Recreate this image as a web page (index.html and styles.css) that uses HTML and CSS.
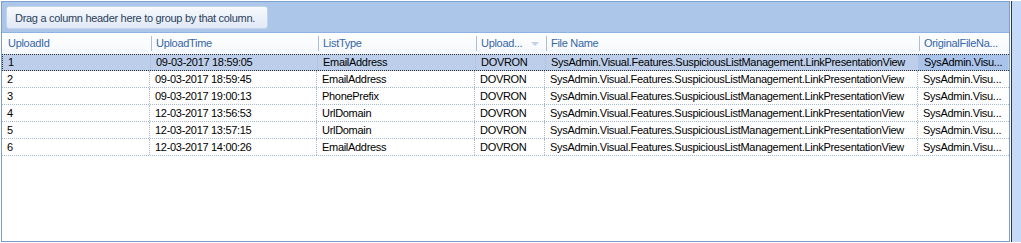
FILE: index.html
```html
<!DOCTYPE html>
<html lang="en">

<head>
  <meta charset="UTF-8">
  <title>Uploads</title>
  <link rel="stylesheet" href="styles.css">
</head>

<body>
  <div class="frame">
    <div class="grid">
      <!-- Group panel -->
      <div class="group-panel">
        <div class="group-hint">Drag a column header here to group by that column.</div>
      </div>

      <div class="row header">
        <div class="cell c1">UploadId</div>
        <div class="cell c2">UploadTime</div>
        <div class="cell c3">ListType</div>
        <div class="cell c4">Upload...<span class="sort"></span></div>
        <div class="cell c5">File Name</div>
        <div class="cell c6">OriginalFileNa...</div>
      </div>

      <div class="row data selected">
        <div class="cell c1">1</div>
        <div class="cell c2">09-03-2017 18:59:05</div>
        <div class="cell c3">EmailAddress</div>
        <div class="cell c4">DOVRON</div>
        <div class="cell c5">SysAdmin.Visual.Features.SuspiciousListManagement.LinkPresentationView</div>
        <div class="cell c6 focused">SysAdmin.Visu...</div>
      </div>
      <div class="row data">
        <div class="cell c1">2</div>
        <div class="cell c2">09-03-2017 18:59:45</div>
        <div class="cell c3">EmailAddress</div>
        <div class="cell c4">DOVRON</div>
        <div class="cell c5">SysAdmin.Visual.Features.SuspiciousListManagement.LinkPresentationView</div>
        <div class="cell c6">SysAdmin.Visu...</div>
      </div>
      <div class="row data">
        <div class="cell c1">3</div>
        <div class="cell c2">09-03-2017 19:00:13</div>
        <div class="cell c3">PhonePrefix</div>
        <div class="cell c4">DOVRON</div>
        <div class="cell c5">SysAdmin.Visual.Features.SuspiciousListManagement.LinkPresentationView</div>
        <div class="cell c6">SysAdmin.Visu...</div>
      </div>
      <div class="row data">
        <div class="cell c1">4</div>
        <div class="cell c2">12-03-2017 13:56:53</div>
        <div class="cell c3">UrlDomain</div>
        <div class="cell c4">DOVRON</div>
        <div class="cell c5">SysAdmin.Visual.Features.SuspiciousListManagement.LinkPresentationView</div>
        <div class="cell c6">SysAdmin.Visu...</div>
      </div>
      <div class="row data">
        <div class="cell c1">5</div>
        <div class="cell c2">12-03-2017 13:57:15</div>
        <div class="cell c3">UrlDomain</div>
        <div class="cell c4">DOVRON</div>
        <div class="cell c5">SysAdmin.Visual.Features.SuspiciousListManagement.LinkPresentationView</div>
        <div class="cell c6">SysAdmin.Visu...</div>
      </div>
      <div class="row data">
        <div class="cell c1">6</div>
        <div class="cell c2">12-03-2017 14:00:26</div>
        <div class="cell c3">EmailAddress</div>
        <div class="cell c4">DOVRON</div>
        <div class="cell c5">SysAdmin.Visual.Features.SuspiciousListManagement.LinkPresentationView</div>
        <div class="cell c6">SysAdmin.Visu...</div>
      </div>
    </div>
    <div class="gutter"></div>
  </div>
</body>

</html>
```

FILE: styles.css
```css
body,
html {
  margin: 0;
  padding: 0;
  width: 100%;
  height: 100%;
  overflow: hidden;
  background-color: #ffffff;
}

.frame {
  display: flex;
  height: 241px;
  margin-top: 1px;
  font-family: "Liberation Sans", Arial, sans-serif;
  font-size: 11px;
  letter-spacing: -0.3px;
}

.grid {
  width: 1009px;
  margin-left: 1px;
  border: 1px solid #7f9cc7;
  border-top-color: #7da2ce;
  background-color: #ffffff;
  box-sizing: border-box;
}

.gutter {
  width: 9px;
  margin-left: 1px;
  border-left: 1px solid #2a3a4c;
  background-color: #c4daf8;
}

.group-panel {
  height: 31px;
  padding: 4px 0 0 4px;
  box-sizing: border-box;
  background-color: #abc6e8;
  border-bottom: 1px solid #8db2e3;
}

.group-hint {
  display: inline-block;
  width: 262px;
  height: 23px;
  line-height: 22px;
  padding-left: 8px;
  box-sizing: border-box;
  white-space: nowrap;
  border: 1px solid #c3d4ea;
  border-radius: 3px;
  background: linear-gradient(#f7f9fd, #e0e9f5);
  color: #2b3f5c;
}

.row {
  display: flex;
}

.cell {
  padding-left: 5px;
  box-sizing: border-box;
  white-space: nowrap;
  overflow: hidden;
}

.c1 { width: 148px; }
.c2 { width: 167px; }
.c3 { width: 158px; }
.c4 { width: 70px; }
.c5 { width: 373px; }
.c6 { width: 89px; }

.header {
  height: 21px;
  line-height: 21px;
  color: #3566a6;
  background: linear-gradient(#ffffff, #f5f8fc);
}

.header .cell {
  border-left: 1px solid transparent;
  background-image: linear-gradient(#a9c0dd, #a9c0dd);
  background-repeat: no-repeat;
  background-size: 1px 15px;
  background-position: 0 3px;
  position: relative;
}

.header .c1 {
  background-image: none;
}

.sort {
  position: absolute;
  right: 6px;
  top: 9px;
  border-left: 4px solid transparent;
  border-right: 4px solid transparent;
  border-top: 4px solid #c2d2e6;
}

.data {
  height: 17px;
  line-height: 16px;
  color: #000000;
  border-bottom: 1px dotted #a8bad2;
  box-sizing: border-box;
}

.data .cell {
  border-right: 1px dotted #a8bad2;
}

.data .c6 {
  border-right: none;
}

.selected {
  background-color: #bccee9;
  border-top: 1px dotted #333333;
  border-bottom: 1px dotted #333333;
  border-left: 1px dotted #333333;
  line-height: 14px;
}

.selected .focused {
  background-color: #a9c3ea;
}
```
